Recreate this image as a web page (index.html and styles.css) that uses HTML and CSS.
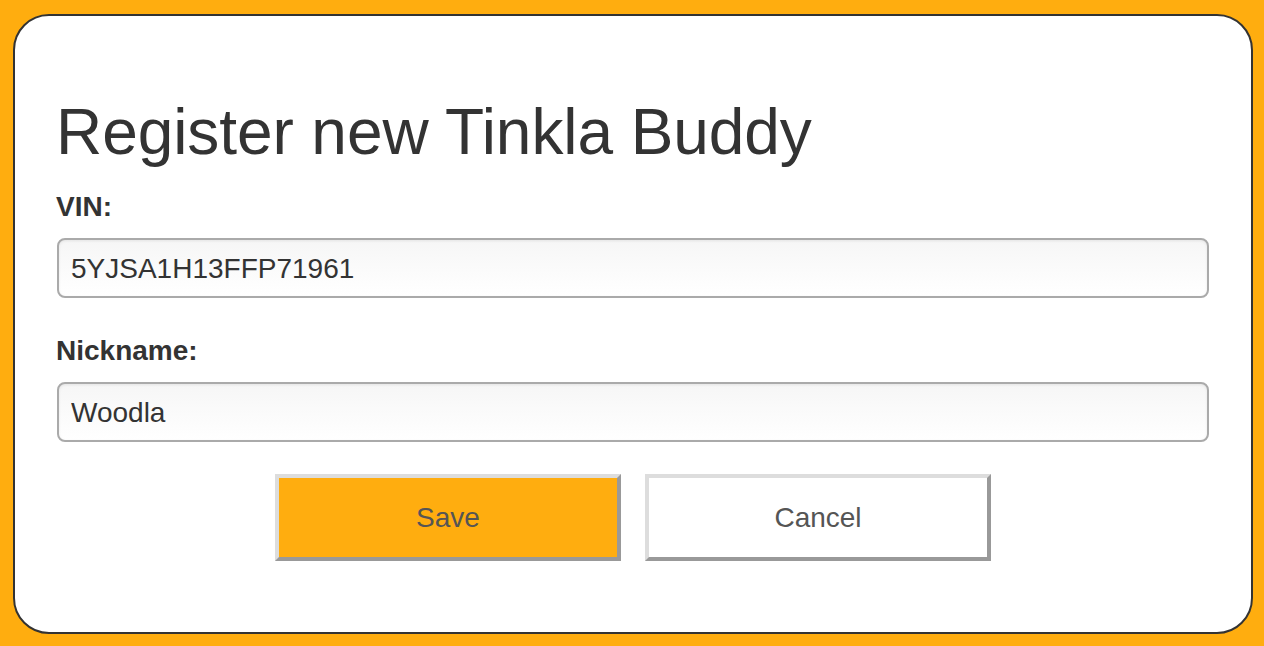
FILE: index.html
```html
<!DOCTYPE html>
<html lang="en">
<head>
<meta charset="UTF-8">
<meta name="viewport" content="width=device-width, initial-scale=1.0">
<title>Register new Tinkla Buddy</title>
<link rel="stylesheet" href="styles.css">
</head>
<body>
<div class="dialog">
    <h1>Register new Tinkla Buddy</h1>
    <div class="input-group">
        <label for="vin">VIN:</label>
        <input type="text" id="vin" value="5YJSA1H13FFP71961">
    </div>
    <div class="input-group">
        <label for="nickname">Nickname:</label>
        <input type="text" id="nickname" value="Woodla">
    </div>
    <div class="buttons">
        <button class="btn btn-save">Save</button>
        <button class="btn btn-cancel">Cancel</button>
    </div>
</div>
</body>
</html>
```

FILE: styles.css
```css
html, body {
    height: 100%;
}
body {
    font-family: "Liberation Sans", Arial, sans-serif;
    background-color: #ffad0f;
    color: #333;
    margin: 0;
    padding: 14px 11px 12px 13px;
    box-sizing: border-box;
}
.dialog {
    background-color: #fff;
    border: 2px solid #333;
    border-radius: 36px;
    height: 100%;
    box-sizing: border-box;
    padding: 80px 42px 0 42px;
}
h1 {
    font-size: 64px;
    font-weight: normal;
    letter-spacing: -0.08px;
    margin: 0 0 23px -1px;
    line-height: 72px;
}
.input-group + .input-group {
    margin-top: 37px;
}
label {
    display: block;
    font-weight: bold;
    font-size: 28px;
    line-height: 32px;
    margin: 0 0 15px -1px;
}
input[type="text"] {
    display: block;
    width: 1152px;
    height: 60px;
    box-sizing: border-box;
    border: 2px solid #aaa;
    border-radius: 8px;
    padding: 2px 12px 0;
    font-family: inherit;
    font-size: 28px;
    color: #333;
    background: linear-gradient(#f6f6f6, #fff);
    box-shadow: inset 0 1px 3px rgba(0, 0, 0, 0.08);
}
.buttons {
    display: flex;
    justify-content: center;
    gap: 24px;
    margin-top: 32px;
}
.btn {
    width: 346px;
    height: 87px;
    padding-top: 2px;
    font-family: inherit;
    font-size: 28px;
    color: #555;
    border: 4px solid;
    border-color: #ddd #999 #999 #ddd;
    cursor: pointer;
}
.btn-save {
    background-color: #ffad0f;
}
.btn-cancel {
    background-color: #fff;
}
```
